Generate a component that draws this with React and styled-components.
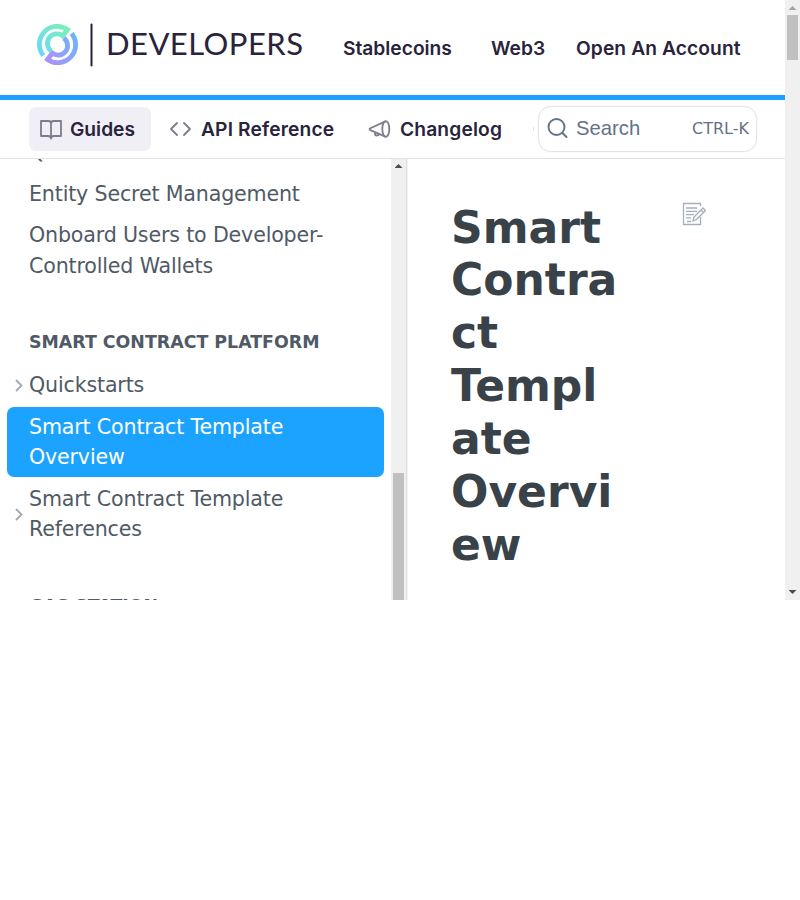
import React from "react";
import styled, { createGlobalStyle, css } from "styled-components";

const GlobalStyle = createGlobalStyle`
  * { box-sizing: border-box; }
  body { margin: 0; background: #fff; font-family: "DejaVu Sans", sans-serif; }
`;
const Viewport = styled.div`
  width: 800px; height: 600px; display: flex; overflow: hidden;
`;
const Page = styled.div`
  width: 785px; height: 600px; display: flex; flex-direction: column; overflow: hidden;
`;
const Header = styled.header`
  height: 100px; flex: none; display: flex; align-items: center;
  padding: 0 0 0 35px; border-bottom: 5px solid #1ba3ff;
`;
const Logo = styled.svg`
  width: 272px; height: 50px; flex: none; margin-top: -5px;
`;
const LogoText = styled.text`
  font-family: Lato, sans-serif; font-size: 31px; fill: #29233b;
`;
const navText = css`
  font-family: Inter, sans-serif; font-weight: 600; color: #29233b; white-space: nowrap;
  line-height: 26px; font-size: 19.2px;
`;
const TopLink = styled.a`
  ${navText}
  width: ${p => p.$w}px; margin-left: ${p => p.$gap}px;
  letter-spacing: ${p => p.$ls || 0}px;
`;
const NavBar = styled.nav`
  height: 59px; flex: none; display: flex; align-items: center;
  border-bottom: 1px solid #e3e4e6; padding: 0 28px 0 29px;
`;
const Tab = styled.a`
  ${navText}
  letter-spacing: ${p => p.$ls || 0}px;
  height: 44px; width: ${p => p.$w}px; flex: none; display: flex; align-items: center;
  gap: ${p => p.$inner || 7}px; padding-left: 10px; border-radius: 7px;
  background: ${p => (p.$active ? "#f0eff5" : "transparent")};
  margin-right: ${p => p.$gap || 0}px;
`;
const TabIcon = styled.svg`
  width: 24px; height: 24px; flex: none; fill: none; stroke: #7f7b8c;
  stroke-width: 1.8; stroke-linecap: round; stroke-linejoin: round;
`;
const Overflowed = styled.span`
  width: 1px; height: 4px; background: #e4e4e8; margin: 0 4px 0 auto;
`;
const Search = styled.div`
  width: 219px; height: 46px; flex: none; display: flex; align-items: center;
  border: 1px solid #e3e4e6; box-shadow: 0 0 1px #d8dade; border-radius: 13px; padding: 0 7px 2px 8px;
  color: #637288; font: 20.25px "Liberation Sans", sans-serif;
`;
const SearchIcon = styled.svg`
  width: 22px; height: 22px; fill: none; stroke: #637288; stroke-width: 1.9;
  stroke-linecap: round; margin-right: 7px;
`;
const Shortcut = styled.span`
  font: 16px "DejaVu Sans", sans-serif; margin: 1px 0 0 auto;
`;
const Body = styled.div` flex: 1; min-height: 0; display: flex; `;
const Sidebar = styled.aside`
  width: 391px; height: 441px; overflow: hidden; padding: 0 7px; flex: none;
`;
const Scrolled = styled.div`
  margin-top: -26.9px; display: flex; flex-direction: column; gap: 2px;
`;
const Item = styled.a`
  flex: none; display: flex; align-items: center; padding: 4.7px 0; border-radius: 7px;
  font-size: 20.6px; letter-spacing: -0.165px; line-height: 30.375px;
  color: ${p => (p.$active ? "#fff" : "#4f5a66")};
  background: ${p => (p.$active ? "#1ba3ff" : "transparent")};
`;
const Arrow = styled.span`
  width: 22px; padding: 1px 0 0 8px; display: flex; flex: none;
`;
const Heading = styled.h3`
  margin: 42px 0 9.8px 22px; font-size: 17.4px; line-height: 24px; height: 24px; flex: none;
  font-weight: 700; color: #4f5a66;
`;
const Track = styled.div`
  width: 15px; flex: none; background: #f0f0f0; display: flex; flex-direction: column; align-items: center;
`;
const Triangle = styled.i`
  width: 8px; height: 4px; flex: none; background: ${p => p.$c || "#4c4c4c"};
  clip-path: ${p => (p.$down ? "polygon(0 0,100% 0,50% 100%)" : "polygon(50% 0,100% 100%,0 100%)")};
  margin: ${p => p.$m};
`;
const Thumb = styled.div`
  width: 11px; flex: none; height: ${p => p.$h}px; margin-top: ${p => p.$top || 0}px; background: #c0c0c0;
`;
const Article = styled.main`
  flex: 1; display: flex; justify-content: space-between; align-items: flex-start;
  padding: 42px 79px 0 44px; border-left: 1px solid #dedfe1; box-shadow: inset 1px 0 #f3f3f4;
`;
const Title = styled.h1`
  margin: 0.65px 0 0; font-size: 44px; line-height: 52.85px; font-weight: 700; color: #384248;
  white-space: nowrap;
`;

const Caret = () => (
  <Arrow>
    <svg width="8" height="13" viewBox="0 0 8 13" fill="none" stroke="#a3a9af" strokeWidth="1.8">
      <path d="M1 1 6.5 6.5 1 12" />
    </svg>
  </Arrow>
);
const Entry = ({ lines, caret, active }) => (
  <Item $active={active}>
    {caret ? <Caret /> : <Arrow />}
    <span>{lines.map((l, i) => <React.Fragment key={l}>{i > 0 && <br />}{l}</React.Fragment>)}</span>
  </Item>
);

export default function App() {
  return (
    <>
      <GlobalStyle />
      <Viewport>
        <Page>
          <Header>
            <Logo viewBox="0 0 272 50">
              <defs>
                <linearGradient id="mint" x1="2" y1="34" x2="34" y2="6" gradientUnits="userSpaceOnUse">
                  <stop stopColor="#68d7fa" /><stop offset="1" stopColor="#7ef1b3" />
                </linearGradient>
                <linearGradient id="violet" x1="9" y1="42" x2="42" y2="14" gradientUnits="userSpaceOnUse">
                  <stop stopColor="#b090f5" /><stop offset="1" stopColor="#68b7fb" />
                </linearGradient>
              </defs>
              <g fill="none" strokeWidth="4.8" strokeLinejoin="miter" transform="translate(.2 .2)">
                <path stroke="url(#mint)" d="M8.200 35.300A17.900 17.900 0 0 1 32.300 9.300L27.500 15.600A9 9 0 0 0 15.900 30.600" />
                <path stroke="url(#violet)" d="M36.400 13.300A17.900 17.900 0 0 1 12.300 39.300L17.100 33A9 9 0 0 0 28.700 18" />
              </g>
              <path d="M56.500 4.500v41" stroke="#29233b" strokeWidth="2" strokeLinecap="round" />
              <LogoText x="71" y="35.2" textLength="197" lengthAdjust="spacing">DEVELOPERS</LogoText>
            </Logo>
            <TopLink $gap={36} $w={108}>Stablecoins</TopLink>
            <TopLink $gap={40} $w={55}>Web3</TopLink>
            <TopLink $gap={30} $w={165} $ls={0.1}>Open An Account</TopLink>
          </Header>
          <NavBar>
            <Tab $active $w={122} $gap={8}>
              <TabIcon viewBox="0 0 24 24">
                <path d="M12 6.500c0-1.400-1-2.500-2.500-2.500H2v15H9c2 0 3 1 3 2.500 0-1.500 1-2.500 3-2.500h7v-15h-7.500C13 4 12 5.100 12 6.500v15" />
              </TabIcon>
              Guides
            </Tab>
            <Tab $w={191} $gap={8} $inner={8} $ls={0.15}>
              <TabIcon viewBox="0 0 24 24"><path d="M8 6 2 12l6 6M15 6l6 6-6 6" /></TabIcon>
              API Reference
            </Tab>
            <Tab $w={150} $inner={8} $ls={0.15}>
              <TabIcon viewBox="0 0 24 24">
                <ellipse cx="17.800" cy="12" rx="3.500" ry="7.800" />
                <path d="M17.500 4.400 2.300 11.200C1.300 11.700 1.300 12.700 2.300 13.100L17.500 19.600M7 15.500v1.500c0 2 3.500 2 4 0" />
              </TabIcon>
              Changelog
            </Tab>
            <Overflowed />
            <Search>
              <SearchIcon viewBox="0 0 22 22"><circle cx="9.500" cy="10" r="8" /><path d="m15.500 16 4 4" /></SearchIcon>
              Search
              <Shortcut>CTRL-K</Shortcut>
            </Search>
          </NavBar>
          <Body>
            <Sidebar>
              <Scrolled>
                <Entry caret lines={["Quickstarts"]} />
                <Entry lines={["Entity Secret Management"]} />
                <Entry lines={["Onboard Users to Developer-", "Controlled Wallets"]} />
                <Heading>SMART CONTRACT PLATFORM</Heading>
                <Entry caret lines={["Quickstarts"]} />
                <Entry active lines={["Smart Contract Template", "Overview"]} />
                <Entry caret lines={["Smart Contract Template", "References"]} />
                <Heading>GAS STATION</Heading>
              </Scrolled>
            </Sidebar>
            <Track>
              <Triangle $m="5px 0 0" />
              <Thumb $top={305} $h={127} />
            </Track>
            <Article>
              <Title>Smart<br />Contra<br />ct<br />Templ<br />ate<br />Overvi<br />ew</Title>
              <svg width="26" height="26" viewBox="0 0 26 26" fill="none" stroke="#a3aebf" strokeWidth="1.3">
                <path d="M20.500 5V2.500h-17v21h17V16M6 7h11M6 10.300h11M6 13.600h8M6 16.900h5M7 20.500h4" />
                <path d="m13 20 1-4L23 7l2.500 2.500-9 9zM21 9l2.500 2.500" />
              </svg>
            </Article>
          </Body>
        </Page>
        <Track>
          <Triangle $c="#a3a3a3" $m="6px 0 5px" />
          <Thumb $h={45} />
          <Triangle $down $m="auto 0 6px" />
        </Track>
      </Viewport>
    </>
  );
}
